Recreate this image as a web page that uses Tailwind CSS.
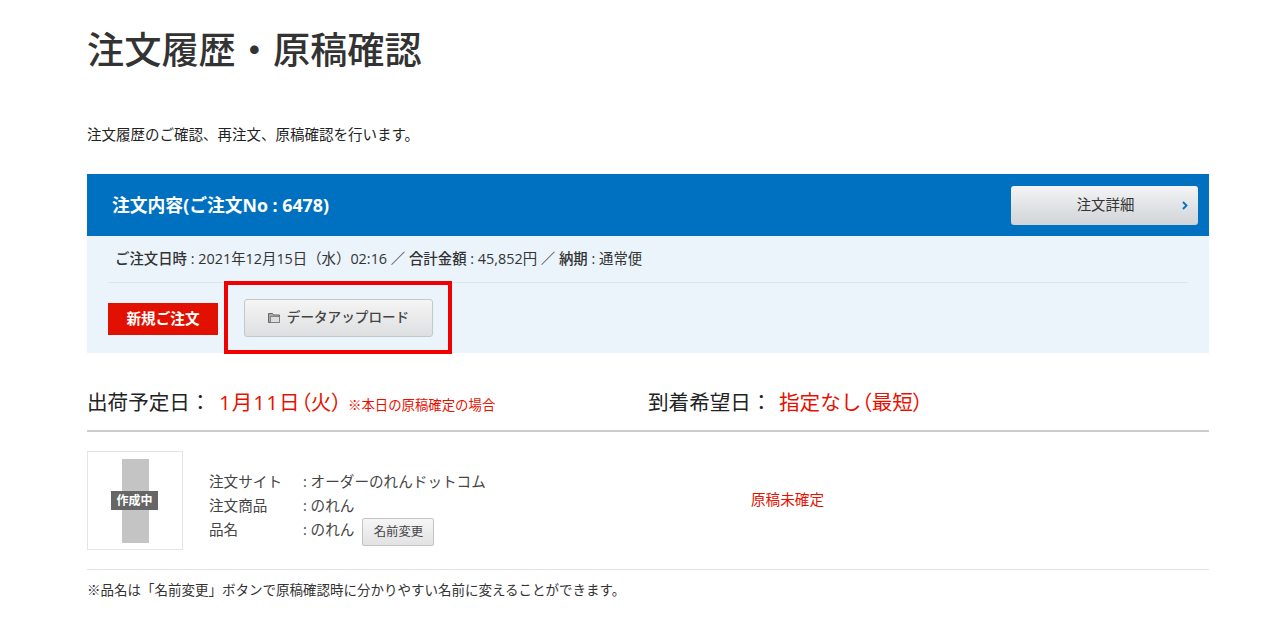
<!DOCTYPE html>
<html lang="ja">

<head>
  <meta charset="UTF-8">
  <meta name="viewport" content="width=device-width, initial-scale=1.0">
  <script src="https://cdn.jsdelivr.net/npm/@tailwindcss/browser@4"></script>
  <title>注文履歴・原稿確認</title>
</head>

<body class="bg-white text-[#333] font-['Open_Sans','Noto_Sans_CJK_JP',sans-serif] overflow-hidden">
  <main class="w-[1122px] ml-[87px]">
    <h1 class="h-[52px] mt-[24px] text-[37.2px] leading-[52px] font-medium text-[#333]">注文履歴・原稿確認</h1>
    <p class="mt-[49px] h-[20px] text-[14.5px] leading-[20px] text-[#222]">注文履歴のご確認、再注文、原稿確認を行います。</p>

    <!-- 注文ヘッダー -->
    <section class="mt-[29px] bg-[#ebf3fb]">
      <div class="h-[62px] bg-[#0071c1] flex items-center justify-between pl-[25px] pr-[11px]">
        <h2 class="text-[17.8px] font-bold text-white">注文内容(ご注文No : 6478)</h2>
        <a class="relative w-[187px] h-[39px] flex items-center justify-center rounded-[3px] bg-gradient-to-b from-[#f3f4f5] to-[#d0d4d8] text-[14.4px] text-[#333]">
          <span class="pl-[2px]">注文詳細</span>
          <svg class="absolute right-[10px] top-[15px]" width="6" height="9" viewBox="0 0 6 9" fill="none" stroke="#0071c1" stroke-width="1.8"><path d="M1 1l3.500 3.500L1 8" /></svg>
        </a>
      </div>
      <div class="h-[47px] mx-[21px] px-[7px] flex items-center border-b border-[#dfe4e8] text-[14.4px] text-[#333] whitespace-nowrap">
        <b class="font-medium">ご注文日時</b><span>&nbsp;: 2021年12月15日（水）02:16 ／&nbsp;</span><b class="font-medium">合計金額</b><span>&nbsp;: 45,852円 ／&nbsp;</span><b class="font-medium">納期</b><span>&nbsp;: 通常便</span>
      </div>
      <div class="relative h-[70px] pl-[21px] flex items-center">
        <span class="w-[110px] h-[32px] mt-[2px] flex items-center justify-center bg-[#e21000] text-white text-[14.6px] font-bold">新規ご注文</span>
        <a class="ml-[26px] pb-[2px] w-[189px] h-[38px] flex items-center justify-center gap-[7px] rounded-[3px] border border-[#c4c8cc] bg-gradient-to-b from-[#f5f5f5] to-[#dedfe1] text-[13.6px] font-medium text-[#444]">
          <svg class="mt-[2px]" width="12" height="10" viewBox="0 0 12 10"><path d="M.5.500h4l1 1.500h6v7.500H.5z" fill="#aaa" stroke="#666" /><rect x="2.500" y="3.500" width="9" height="6" fill="#ddd" stroke="#777" stroke-width=".8" /></svg>
          データアップロード
        </a>
        <div class="absolute left-[137px] top-[-2px] w-[228px] h-[73px] border-[4px] border-[#f00000]"></div>
      </div>
    </section>

    <!-- 予定日 -->
    <div class="mt-[26px] h-[53px] flex items-start border-b-2 border-[#ccc] text-[20.6px] leading-[46px]">
      <div class="w-[561px] flex items-baseline">
        <span class="w-[132px] text-[#222]">出荷予定日：</span>
        <span class="w-[129px] text-[#e81000] whitespace-nowrap"><span class="tracking-[1px]">1月11日</span><span class="[font-feature-settings:'palt']">（</span>火<span class="[font-feature-settings:'palt']">）</span></span>
        <span class="text-[13.4px] text-[#e81000]">※本日の原稿確定の場合</span>
      </div>
      <div class="flex items-baseline">
        <span class="w-[131px] text-[#222]">到着希望日：</span>
        <span class="text-[#e81000]">指定なし<span class="[font-feature-settings:'palt']">（</span>最短<span class="[font-feature-settings:'palt']">）</span></span>
      </div>
    </div>

    <!-- 商品 -->
    <div class="h-[138px] flex items-center border-b border-[#e2e2e2]">
      <div class="relative shrink-0 w-[96px] h-[99px] border border-[#e4e4e4] flex justify-center items-center">
        <div class="w-[27px] h-[84px] bg-[#c4c4c4]"></div>
        <span class="absolute left-[23px] top-[39px] w-[47px] h-[19px] bg-[#666] text-white text-[12px] font-bold leading-[19px] text-center">作成中</span>
      </div>
      <dl class="ml-[26px] mt-[8px] w-[280px] text-[14.6px] text-[#444] grid grid-cols-[94px_1fr] leading-[24px] items-center">
        <dt>注文サイト</dt>
        <dd class="whitespace-nowrap">: オーダーのれんドットコム</dd>
        <dt>注文商品</dt>
        <dd>: のれん</dd>
        <dt>品名</dt>
        <dd class="flex items-center whitespace-nowrap h-[24px]">: のれん
          <button class="ml-[8px] mt-[7px] w-[72px] h-[28px] rounded-[2px] border border-[#c4c4c4] bg-gradient-to-b from-[#f6f6f6] to-[#e2e2e2] text-[12.4px] text-[#444]">名前変更</button>
        </dd>
      </dl>
      <p class="ml-[262px] -mt-[2px] text-[14.6px] text-[#e81000]">原稿未確定</p>
    </div>

    <p class="mt-[10px] text-[13.5px] leading-[20px] text-[#333]">※品名は「名前変更」ボタンで原稿確認時に分かりやすい名前に変えることができます。</p>
  </main>
</body>

</html>
